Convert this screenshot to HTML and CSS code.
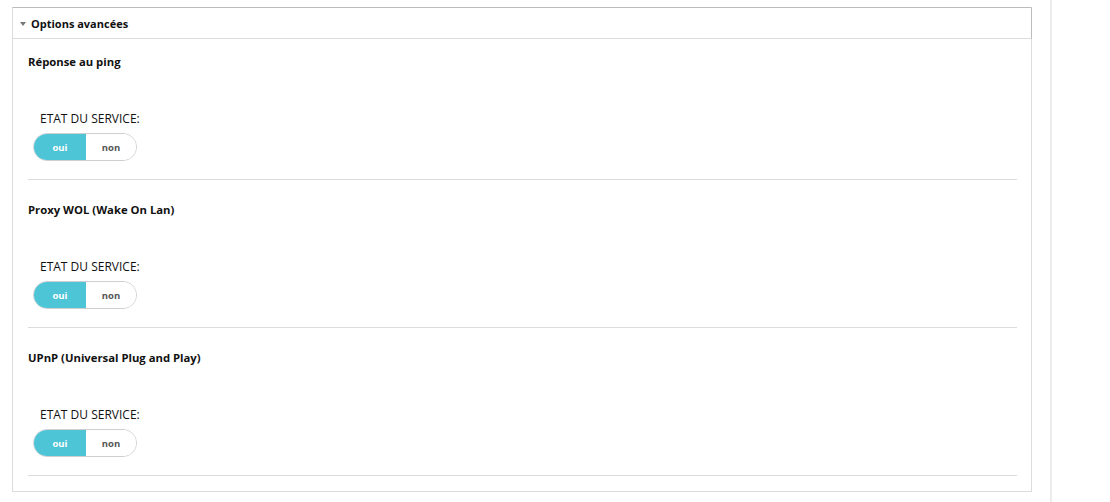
FILE: index.html
```html
<!DOCTYPE html>
<html lang="fr">
<head>
<meta charset="utf-8">
<title>Options avancées</title>
<link rel="stylesheet" href="styles.css">
</head>
<body>
<div class="page">
  <main class="main">
    <section class="panel">
      <header class="panel-head">
        <span class="caret"></span>
        <span class="panel-title">Options avancées</span>
      </header>
      <div class="panel-body">
        <div class="option">
          <h3 class="option-title">Réponse au ping</h3>
          <div class="field">
            <div class="field-label">ETAT DU SERVICE:</div>
            <div class="toggle">
              <span class="seg seg-on">oui</span>
              <span class="seg seg-off">non</span>
            </div>
          </div>
        </div>
        <div class="option">
          <h3 class="option-title">Proxy WOL (Wake On Lan)</h3>
          <div class="field">
            <div class="field-label">ETAT DU SERVICE:</div>
            <div class="toggle">
              <span class="seg seg-on">oui</span>
              <span class="seg seg-off">non</span>
            </div>
          </div>
        </div>
        <div class="option">
          <h3 class="option-title">UPnP (Universal Plug and Play)</h3>
          <div class="field">
            <div class="field-label">ETAT DU SERVICE:</div>
            <div class="toggle">
              <span class="seg seg-on">oui</span>
              <span class="seg seg-off">non</span>
            </div>
          </div>
        </div>
      </div>
    </section>
  </main>
  <aside class="side"></aside>
</div>
</body>
</html>
```

FILE: styles.css
```css
html, body {
  margin: 0;
  padding: 0;
  background: #fff;
}
body {
  font-family: "Open Sans", "Liberation Sans", sans-serif;
  color: #111;
}
.page {
  display: flex;
  min-height: 502px;
}
.main {
  width: 1050px;
  flex: none;
  padding: 7px 0 0 12px;
  box-sizing: border-box;
}
.side {
  flex: 1;
  border-left: 2px solid #ececec;
}
.panel {
  width: 1020px;
  box-sizing: border-box;
  border: 1px solid #dcdcdc;
  border-top-color: #bcbcbc;
}
.panel-head {
  height: 30px;
  display: flex;
  align-items: center;
  border-bottom: 1px solid #dcdcdc;
  border-right: 1px solid #bcbcbc;
  margin-right: -1px;
  padding-left: 7px;
}
.caret {
  width: 0;
  height: 0;
  border-left: 3px solid transparent;
  border-right: 3px solid transparent;
  border-top: 4px solid #777;
  margin-right: 5px;
  margin-top: 1px;
}
.panel-title {
  font-size: 11px;
  font-weight: 700;
  color: #111;
}
.panel-body {
  padding: 15px 14px 15px 15px;
}
.option {
  border-bottom: 1px solid #dcdcdc;
  padding-bottom: 18px;
}
.option + .option {
  padding-top: 22px;
}
.option-title {
  margin: 0;
  font-size: 11.3px;
  line-height: 15px;
  font-weight: 700;
  color: #111;
}
.field {
  padding-top: 41px;
  padding-left: 5px;
}
.field-label {
  font-size: 12px;
  line-height: 17px;
  padding-left: 7px;
  margin-bottom: 6px;
  color: #111;
}
.toggle {
  display: flex;
  width: 104px;
  height: 28px;
  box-sizing: border-box;
  border: 1px solid #cfcfcf;
  border-radius: 14px;
  overflow: hidden;
}
.seg {
  display: flex;
  align-items: center;
  justify-content: center;
  font-size: 9.5px;
  font-weight: 700;
}
.seg-on {
  width: 52px;
  background: #4ec4d7;
  color: #fff;
}
.seg-off {
  flex: 1;
  background: #fff;
  color: #555;
}
```
